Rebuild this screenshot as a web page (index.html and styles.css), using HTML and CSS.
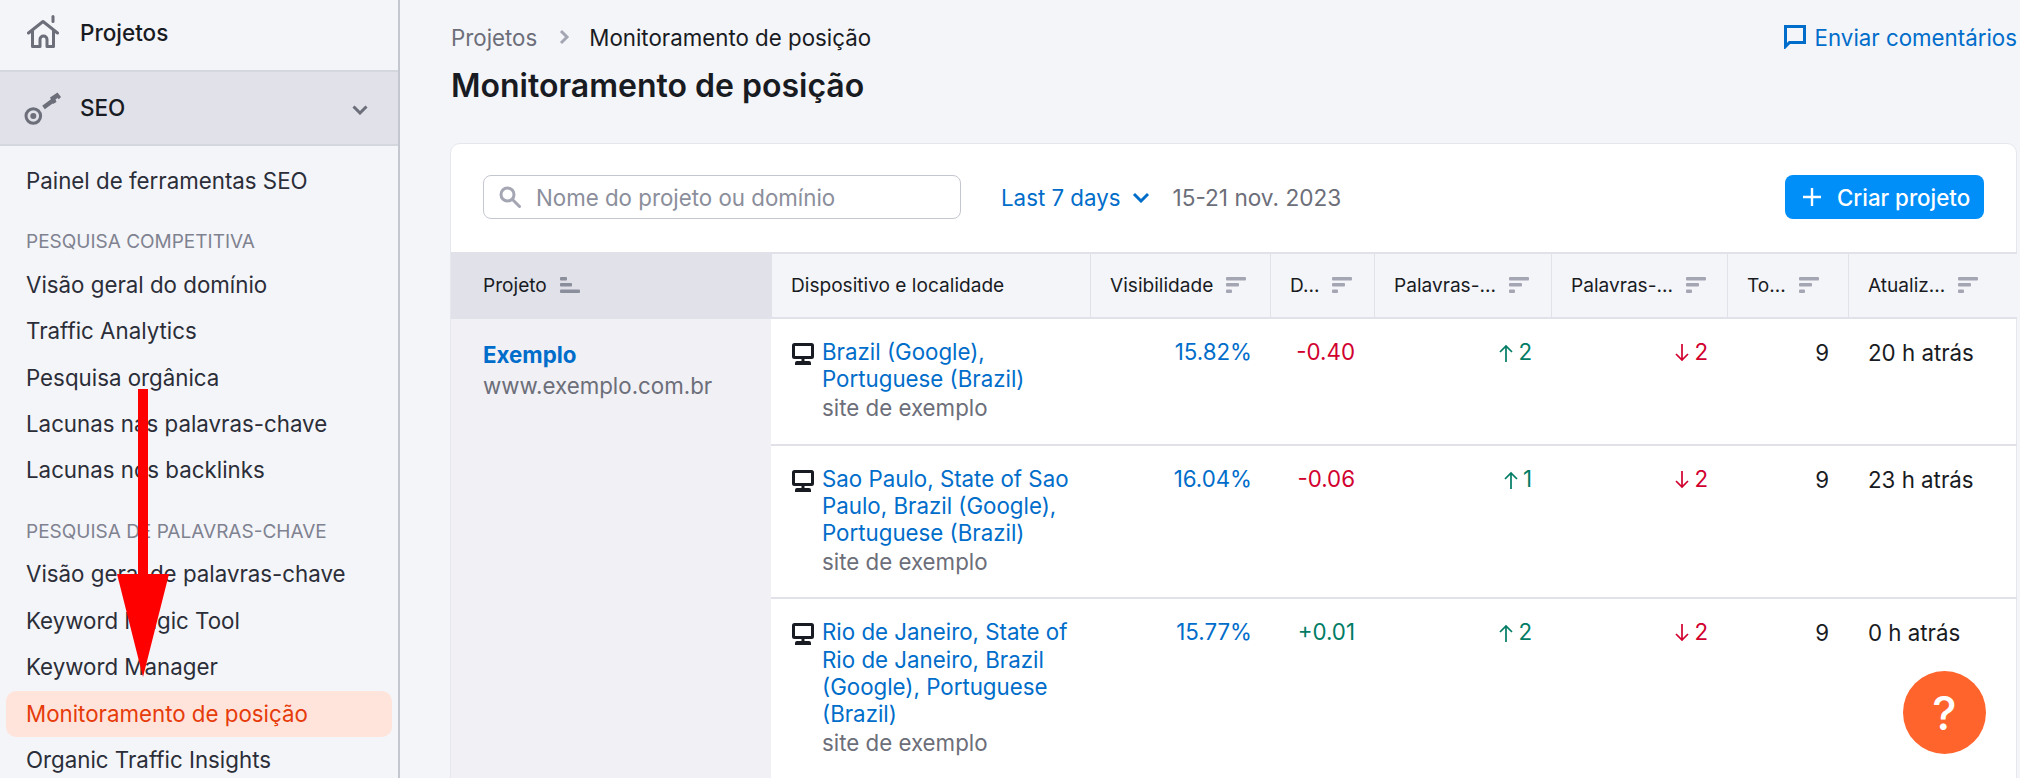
FILE: index.html
```html
<!DOCTYPE html>
<html lang="pt-BR">
<head>
<meta charset="utf-8">
<title>Monitoramento de posição</title>
<link rel="stylesheet" href="styles.css">
</head>
<body>
<div class="app">
  <aside class="sidebar">
    <a class="top-item home">
      <svg class="home-icon" viewBox="0 0 32 33" fill="none" stroke="#6c6e79" stroke-width="3" stroke-linejoin="round" stroke-linecap="round"><path d="M26 1.500v5"/><path d="M1.500 18 16 6.500 30.500 18"/><path d="M5.500 15.500v16h7.500V24.500a3.500 3.500 0 0 1 7 0v7h6.500v-16"/></svg>
      <span>Projetos</span>
    </a>
    <a class="top-item seo">
      <svg class="key-icon" viewBox="0 0 38 34" fill="none"><circle cx="9.300" cy="24" r="7.300" stroke="#6c6e79" stroke-width="3"/><circle cx="9.300" cy="24" r="3" fill="#6c6e79"/><path d="M19.500 15.500 29 8.500" stroke="#6c6e79" stroke-width="4.500"/><path d="M26 5.500 33.500 .5 37 5 34.800 7.300 33.500 6 31.500 7.500 32.500 10 29 12z" fill="#6c6e79"/></svg>
      <span>SEO</span>
      <svg class="chev" viewBox="0 0 16 10" fill="none" stroke="#6c6e79" stroke-width="3"><path d="M1.500 1.500 8 8l6.500-6.500"/></svg>
    </a>
    <nav class="nav">
      <a class="item">Painel de ferramentas SEO</a>
      <h2 class="head">PESQUISA COMPETITIVA</h2>
      <a class="item">Visão geral do domínio</a>
      <a class="item">Traffic Analytics</a>
      <a class="item">Pesquisa orgânica</a>
      <a class="item">Lacunas nas palavras-chave</a>
      <a class="item">Lacunas nos backlinks</a>
      <h2 class="head">PESQUISA DE PALAVRAS-CHAVE</h2>
      <a class="item">Visão geral de palavras-chave</a>
      <a class="item">Keyword Magic Tool</a>
      <a class="item">Keyword Manager</a>
      <a class="item active">Monitoramento de posição</a>
      <a class="item">Organic Traffic Insights</a>
    </nav>
  </aside>
  <main class="main">
    <div class="crumbs">
      <div class="crumb-left">
        <span class="crumb-muted">Projetos</span>
        <svg class="crumb-sep" viewBox="0 0 11 16" fill="none" stroke="#a4a6b3" stroke-width="3"><path d="M2 2l6 6-6 6"/></svg>
        <span>Monitoramento de posição</span>
      </div>
      <a class="feedback">
        <svg class="fb-icon" viewBox="0 0 22 24" fill="none" stroke="#006dca" stroke-width="3"><path d="M1.500 1.500h19v16H5.500L1.500 21.500z" stroke-linejoin="miter"/></svg>
        <span>Enviar comentários</span>
      </a>
    </div>
    <h1 class="title">Monitoramento de posição</h1>
    <section class="card">
      <div class="toolbar">
        <div class="search">
          <svg class="search-icon" viewBox="0 0 22 22" fill="none" stroke="#a4a6b3" stroke-width="3"><circle cx="8.500" cy="8.500" r="6.500"/><path d="M13.500 13.500 20.500 20.500" stroke-linecap="round"/></svg>
          <span>Nome do projeto ou domínio</span>
        </div>
        <a class="range">Last 7 days
          <svg class="range-chev" viewBox="0 0 18 11" fill="none" stroke="#006dca" stroke-width="3"><path d="M2 2l7 7 7-7"/></svg>
        </a>
        <span class="dates">15-21 nov. 2023</span>
        <a class="create">
          <svg class="plus" viewBox="0 0 18 18" stroke="#fff" stroke-width="2.400"><path d="M9 0v18M0 9h18"/></svg>
          <span>Criar projeto</span>
        </a>
      </div>
      <table class="grid">
        <colgroup>
          <col class="c1"><col class="c2"><col class="c3"><col class="c4"><col class="c5"><col class="c6"><col class="c7"><col class="c8">
        </colgroup>
        <thead>
          <tr>
            <th class="sorted"><span class="th">Projeto <svg class="sort" viewBox="0 0 20 16" fill="#8b8e9b"><rect width="7" height="3.500" rx="1"/><rect y="6" width="12" height="3.500" rx="1"/><rect y="12.500" width="20" height="3.500" rx="1"/></svg></span></th>
            <th><span class="th">Dispositivo e localidade</span></th>
            <th><span class="th">Visibilidade <svg class="sort" viewBox="0 0 20 16" fill="#a4a6b3"><rect width="20" height="3.500" rx="1"/><rect y="6" width="13" height="3.500" rx="1"/><rect y="12.500" width="6" height="3.500" rx="1"/></svg></span></th>
            <th><span class="th">D... <svg class="sort" viewBox="0 0 20 16" fill="#a4a6b3"><rect width="20" height="3.500" rx="1"/><rect y="6" width="13" height="3.500" rx="1"/><rect y="12.500" width="6" height="3.500" rx="1"/></svg></span></th>
            <th><span class="th">Palavras-... <svg class="sort" viewBox="0 0 20 16" fill="#a4a6b3"><rect width="20" height="3.500" rx="1"/><rect y="6" width="13" height="3.500" rx="1"/><rect y="12.500" width="6" height="3.500" rx="1"/></svg></span></th>
            <th><span class="th">Palavras-... <svg class="sort" viewBox="0 0 20 16" fill="#a4a6b3"><rect width="20" height="3.500" rx="1"/><rect y="6" width="13" height="3.500" rx="1"/><rect y="12.500" width="6" height="3.500" rx="1"/></svg></span></th>
            <th><span class="th">To... <svg class="sort" viewBox="0 0 20 16" fill="#a4a6b3"><rect width="20" height="3.500" rx="1"/><rect y="6" width="13" height="3.500" rx="1"/><rect y="12.500" width="6" height="3.500" rx="1"/></svg></span></th>
            <th><span class="th">Atualiz... <svg class="sort" viewBox="0 0 20 16" fill="#a4a6b3"><rect width="20" height="3.500" rx="1"/><rect y="6" width="13" height="3.500" rx="1"/><rect y="12.500" width="6" height="3.500" rx="1"/></svg></span></th>
          </tr>
        </thead>
        <tbody>
          <tr>
            <td class="project" rowspan="3">
              <a class="proj-name">Exemplo</a>
              <div class="proj-url">www.exemplo.com.br</div>
            </td>
            <td>
              <div class="loc">
                <svg class="device" viewBox="0 0 22 22"><path d="M2.500 0h17A2.500 2.500 0 0 1 22 2.500v11a2.500 2.500 0 0 1-2.500 2.500h-17A2.500 2.500 0 0 1 0 13.500v-11A2.500 2.500 0 0 1 2.500 0zM3 3v10h16V3z" fill="#191b23" fill-rule="evenodd"/><path d="M9.500 16h3v2H17a2 2 0 0 1 2 2v2H3v-2a2 2 0 0 1 2-2h4.500z" fill="#191b23"/></svg>
                <div><a class="link">Brazil (Google), Portuguese (Brazil)</a><div class="sub">site de exemplo</div></div>
              </div>
            </td>
            <td class="num link">15.82%</td>
            <td class="num bad">-0.40</td>
            <td class="num good"><svg class="arrow" viewBox="0 0 14 18" fill="none" stroke="#007c65" stroke-width="1.700"><path d="M7 18V2M1 8l6-6 6 6"/></svg>2</td>
            <td class="num bad"><svg class="arrow" viewBox="0 0 14 18" fill="none" stroke="#d1002f" stroke-width="1.700"><path d="M7 0v16M1 10l6 6 6-6"/></svg>2</td>
            <td class="num plain">9</td>
            <td class="plain">20 h atrás</td>
          </tr>
          <tr>
            <td>
              <div class="loc">
                <svg class="device" viewBox="0 0 22 22"><path d="M2.500 0h17A2.500 2.500 0 0 1 22 2.500v11a2.500 2.500 0 0 1-2.500 2.500h-17A2.500 2.500 0 0 1 0 13.500v-11A2.500 2.500 0 0 1 2.500 0zM3 3v10h16V3z" fill="#191b23" fill-rule="evenodd"/><path d="M9.500 16h3v2H17a2 2 0 0 1 2 2v2H3v-2a2 2 0 0 1 2-2h4.500z" fill="#191b23"/></svg>
                <div><a class="link">Sao Paulo, State of Sao Paulo, Brazil (Google), Portuguese (Brazil)</a><div class="sub">site de exemplo</div></div>
              </div>
            </td>
            <td class="num link">16.04%</td>
            <td class="num bad">-0.06</td>
            <td class="num good"><svg class="arrow" viewBox="0 0 14 18" fill="none" stroke="#007c65" stroke-width="1.700"><path d="M7 18V2M1 8l6-6 6 6"/></svg>1</td>
            <td class="num bad"><svg class="arrow" viewBox="0 0 14 18" fill="none" stroke="#d1002f" stroke-width="1.700"><path d="M7 0v16M1 10l6 6 6-6"/></svg>2</td>
            <td class="num plain">9</td>
            <td class="plain">23 h atrás</td>
          </tr>
          <tr>
            <td>
              <div class="loc">
                <svg class="device" viewBox="0 0 22 22"><path d="M2.500 0h17A2.500 2.500 0 0 1 22 2.500v11a2.500 2.500 0 0 1-2.500 2.500h-17A2.500 2.500 0 0 1 0 13.500v-11A2.500 2.500 0 0 1 2.500 0zM3 3v10h16V3z" fill="#191b23" fill-rule="evenodd"/><path d="M9.500 16h3v2H17a2 2 0 0 1 2 2v2H3v-2a2 2 0 0 1 2-2h4.500z" fill="#191b23"/></svg>
                <div><a class="link">Rio de Janeiro, State of Rio de Janeiro, Brazil (Google), Portuguese (Brazil)</a><div class="sub">site de exemplo</div></div>
              </div>
            </td>
            <td class="num link">15.77%</td>
            <td class="num good">+0.01</td>
            <td class="num good"><svg class="arrow" viewBox="0 0 14 18" fill="none" stroke="#007c65" stroke-width="1.700"><path d="M7 18V2M1 8l6-6 6 6"/></svg>2</td>
            <td class="num bad"><svg class="arrow" viewBox="0 0 14 18" fill="none" stroke="#d1002f" stroke-width="1.700"><path d="M7 0v16M1 10l6 6 6-6"/></svg>2</td>
            <td class="num plain">9</td>
            <td class="plain">0 h atrás</td>
          </tr>
        </tbody>
      </table>
    </section>
  </main>
</div>
<svg class="red-arrow" viewBox="0 0 52 288"><path d="M21 0h10v185h21L26 288 0 185h21z" fill="#ff0000"/></svg>
<a class="help">?</a>
</body>
</html>
```
FILE: styles.css
```css
* { box-sizing: border-box; }
html, body { margin: 0; height: 778px; overflow: hidden; }
body { background: #f4f5f9; font-family: Inter, "Liberation Sans", sans-serif; color: #191b23; position: relative; }
a { color: inherit; text-decoration: none; }
.app { display: flex; height: 778px; }

.sidebar { width: 400px; flex: none; border-right: 2px solid #c4c7cf; background: #f4f5f9; }
.top-item { display: flex; align-items: center; height: 70px; padding-left: 26px; font-size: 22.500px; font-weight: 500; position: relative; }
.home { padding-bottom: 5px; }
.home-icon { width: 32px; height: 33px; flex: none; margin: -2px 21px 0 1px; }
.key-icon { width: 38px; height: 34px; flex: none; margin: 3px 18px 0 -2px; }
.seo { height: 76px; padding-bottom: 2px; background: #e0e1e9; border-top: 2px solid #d5d7df; border-bottom: 2px solid #d5d7df; }
.chev { width: 16px; height: 10px; position: absolute; left: 352px; top: 33px; }
.nav { padding: 12px 6px 0 6px; }
.item { display: block; height: 46.400px; line-height: 46.400px; padding-left: 20px; font-size: 22.300px; color: #2b2e38; border-radius: 10px; white-space: nowrap; }
.active { background: #ffe4dc; color: #e63b0a; }
.head { margin: 25px 0 6.500px 20px; font-size: 19px; line-height: 26px; font-weight: 400; color: #7f8290; }

.main { flex: 1; min-width: 0; padding-left: 50px; padding-right: 3px; overflow: hidden; }
.crumbs { display: flex; justify-content: space-between; align-items: center; height: 74px; font-size: 22.300px; padding-left: 1px; }
.crumb-left { display: flex; align-items: center; }
.crumb-muted { color: #6c6e79; }
.crumb-sep { width: 11px; height: 16px; margin: 0 19px 0 22px; }
.feedback { display: flex; align-items: center; color: #006dca; }
.fb-icon { width: 22px; height: 24px; margin-right: 9px; }
.title { margin: 0; height: 69px; padding-left: 1px; font-size: 32px; line-height: 24px; font-weight: 600; }
.card { background: #fff; border: 1px solid #e6e7ee; border-radius: 10px 10px 0 0; height: 640px; }
.toolbar { display: flex; align-items: center; height: 108px; padding: 0 32px 2px; font-size: 22.300px; }
.search { display: flex; align-items: center; width: 478px; height: 44px; border: 1.500px solid #c4c7cf; border-radius: 8px; padding-left: 15px; color: #8b8e9b; }
.search-icon { width: 22px; height: 22px; margin-right: 15px; }
.range { display: flex; align-items: center; margin-left: 40px; color: #006dca; }
.range-chev { width: 18px; height: 11px; margin-left: 11px; }
.dates { margin-left: 23px; color: #6c6e79; font-size: 22.600px; }
.create { margin-left: auto; display: flex; align-items: center; width: 199px; height: 44px; padding-left: 18px; background: #008ff8; color: #fff; border-radius: 8px; font-weight: 500; }
.plus { width: 18px; height: 18px; margin-right: 16px; }

.grid { border-collapse: separate; border-spacing: 0; table-layout: fixed; width: 1566px; }
.c1 { width: 320px; } .c2 { width: 319px; } .c3 { width: 180px; } .c4 { width: 104px; }
.c5 { width: 177px; } .c6 { width: 176px; } .c7 { width: 121px; } .c8 { width: 169px; }
th { height: 67px; padding: 0 0 2px 19px; background: #f4f5f9; border-top: 2px solid #e0e1e9; border-bottom: 2px solid #e0e1e9; border-left: 1.500px solid #e0e1e9; font-size: 19.100px; font-weight: 400; text-align: left; }
th:first-child { border-left: 0; padding-left: 32px; }
th.sorted { background: #e0e1e9; }
.th { display: flex; align-items: center; gap: 13px; white-space: nowrap; }
.sort { width: 20px; height: 16px; flex: none; }
td { padding: 19px 20px 22px 20px; vertical-align: top; font-size: 22.300px; line-height: 27.200px; border-bottom: 2px solid #e0e1e9; }
td.project { background: #f0f0f5; padding: 21.500px 20px 0 32px; border-bottom: 0; }
tbody tr:last-child td { padding-bottom: 60px; }
.proj-name { display: block; color: #006dca; font-weight: 700; }
.proj-url { color: #6c6e79; margin-top: 4px; }
.loc { display: flex; gap: 8px; padding-left: 1px; }
.device { width: 22px; height: 22px; flex: none; margin-top: 5px; }
.link { color: #006dca; }
.sub { color: #6c6e79; margin-top: 2px; }
.num { text-align: right; white-space: nowrap; padding-right: 19px; }
.num.link { padding-right: 18px; }
.plain { color: #191b23; padding-top: 20px; }
.good { color: #007c65; }
.bad { color: #d1002f; }
.arrow { width: 14px; height: 18px; margin-right: 5px; vertical-align: -2px; }

.red-arrow { position: absolute; left: 117px; top: 389px; width: 52px; height: 288px; }
.help { position: absolute; left: 1903px; top: 671px; width: 83px; height: 83px; border-radius: 50%; background: #ff642d; color: #fff; font-size: 46px; font-weight: 500; display: flex; align-items: center; justify-content: center; }
```
